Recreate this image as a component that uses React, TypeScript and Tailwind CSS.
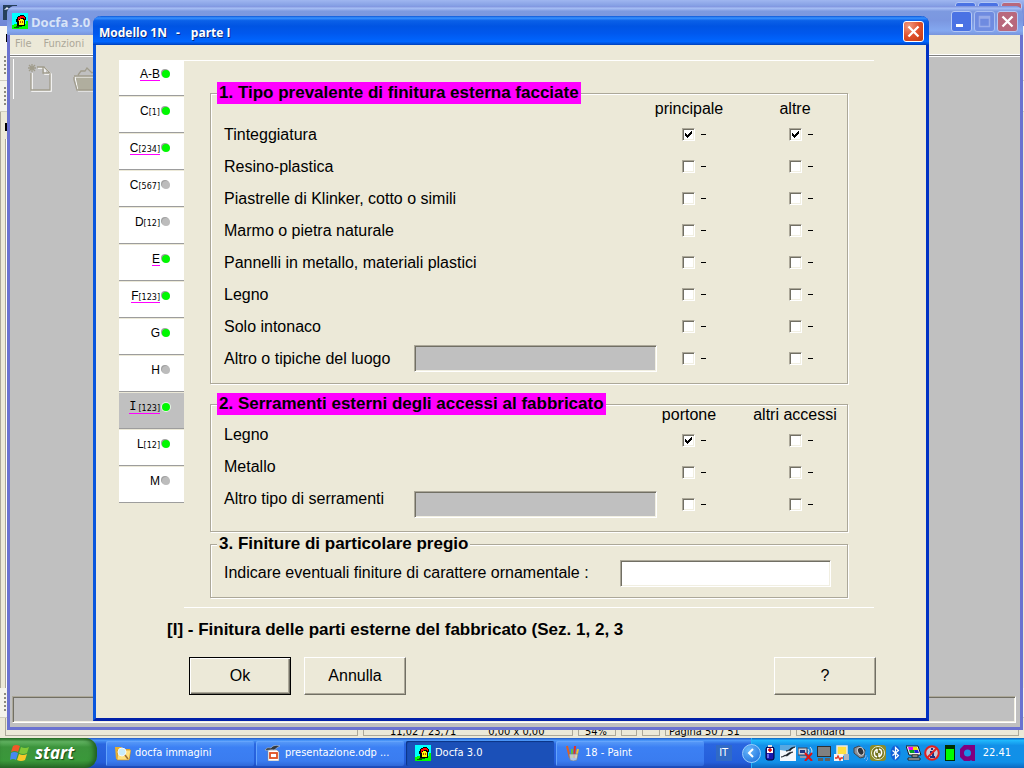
import React, { useState } from "react";

const BEVEL_IN =
  "border border-t-[#aca899] border-l-[#aca899] border-r-white border-b-white shadow-[inset_1px_1px_0_#716f64,inset_-1px_-1px_0_#f1efe2]";

const UI = "font-['Liberation_Sans',Arial,sans-serif]";
const CAPTION = "font-['Open_Sans','Noto_Sans',sans-serif]";
const TAHOMA = "font-['DejaVu_Sans_Condensed','DejaVu_Sans',sans-serif]";

type TabInfo = { main: string; sub?: string; on: boolean; link?: boolean };

const TABS: TabInfo[] = [
  { main: "A-B", on: true, link: true },
  { main: "C", sub: "[1]", on: true },
  { main: "C", sub: "[234]", on: true, link: true },
  { main: "C", sub: "[567]", on: false },
  { main: "D", sub: "[12]", on: false },
  { main: "E", on: true, link: true },
  { main: "F", sub: "[123]", on: true, link: true },
  { main: "G", on: true },
  { main: "H", on: false },
  { main: "I", sub: "[123]", on: true, link: true },
  { main: "L", sub: "[12]", on: true },
  { main: "M", on: false },
];

function Tab({ tab, selected, onSelect }: { tab: TabInfo; selected: boolean; onSelect: () => void }) {
  return (
    <button
      type="button"
      onClick={onSelect}
      className={`mb-px flex h-9 w-full items-start justify-end border-b border-[#9d9d9d] pt-2 pr-[14px] ${selected ? "bg-[#c0c0c0]" : "bg-white"}`}
    >
      <span
        className={`flex h-[13px] items-end border-b text-[12px] leading-3 ${tab.link ? "border-[#ff00ff]" : "border-transparent"}`}
      >
        <span className={tab.main === "I" ? "pr-[2px] font-['Liberation_Mono',monospace]" : ""}>{tab.main}</span>
        {tab.sub && <span className="font-['DejaVu_Sans',sans-serif] text-[8px] leading-[9px]">{tab.sub}</span>}
      </span>
      <span
        className={`mt-[2px] ml-[2px] size-2 rounded-full ${tab.on ? "bg-[#00f800]" : "bg-[#bcbcbc]"} ${
          selected ? "shadow-[0_0_0_1px_#e4f4e4]" : "shadow-[-1px_-1px_0_#a0a0a0]"
        }`}
      />
    </button>
  );
}

function Check({ label, initial = false }: { label: string; initial?: boolean }) {
  const [on, setOn] = useState(initial);
  return (
    <label className="flex items-center gap-[6px]">
      <span className="relative flex size-[13px]">
        <input
          type="checkbox"
          aria-label={label}
          checked={on}
          onChange={(e) => setOn(e.target.checked)}
          className={`size-[13px] appearance-none bg-white ${BEVEL_IN}`}
        />
        {on && (
          <svg viewBox="0 0 13 13" className="pointer-events-none absolute inset-0 size-[13px]" shapeRendering="crispEdges">
            <path d="M3 5h1v1h1v1h1v-1h1v-1h1v-1h1v-1h1v3h-1v1h-1v1h-1v1h-1v1h-1v-1h-1v-1h-1z" fill="#000" />
          </svg>
        )}
      </span>
      <span className="h-px w-[5px] bg-black" />
    </label>
  );
}

const GRID = "grid grid-cols-[minmax(0,1fr)_243px_64px_28px_92px]";

function HeaderRow({ a, b, className }: { a: string; b: string; className: string }) {
  return (
    <div className={`${GRID} h-[18px] leading-[18px] whitespace-nowrap ${className}`}>
      <span className="col-start-3 flex justify-center">{a}</span>
      <span className="col-start-5 flex justify-center">{b}</span>
    </div>
  );
}

type RowInfo = { label: string; a?: boolean; b?: boolean; field?: boolean };

function Row({ row, cols, top }: { row: RowInfo; cols: [string, string]; top?: boolean }) {
  const id = row.label.replace(/\s+/g, "-").toLowerCase();
  const labelClass = `pt-[2px] leading-[18px] whitespace-nowrap ${top ? "self-start" : ""}`;
  return (
    <div className={`${GRID} h-8 items-center`}>
      {row.field ? (
        <label htmlFor={id} className={labelClass}>
          {row.label}
        </label>
      ) : (
        <span className={labelClass}>{row.label}</span>
      )}
      {row.field && <input id={id} type="text" disabled className={`h-[27px] w-full bg-[#c0c0c0] px-1 ${BEVEL_IN}`} />}
      <div className="col-start-3 pl-[25px]">
        <Check label={`${row.label} ${cols[0]}`} initial={row.a} />
      </div>
      <div className="col-start-5 pl-10">
        <Check label={`${row.label} ${cols[1]}`} initial={row.b} />
      </div>
    </div>
  );
}

function Group({ title, marked, className, children }: { title: string; marked?: boolean; className: string; children: React.ReactNode }) {
  return (
    <fieldset
      className={`min-w-0 border border-[#aca899] pr-[6px] pl-[13px] shadow-[1px_1px_0_#fff,inset_1px_1px_0_#fff] ${className}`}
    >
      <legend
        className={`-ml-[7px] h-[22px] px-[2px] text-[17px] leading-[22px] font-bold whitespace-nowrap ${marked ? "bg-[#ff00ff]" : "bg-[#ece9d8]"}`}
      >
        {title}
      </legend>
      {children}
    </fieldset>
  );
}

const FACADE: RowInfo[] = [
  { label: "Tinteggiatura", a: true, b: true },
  { label: "Resino-plastica" },
  { label: "Piastrelle di Klinker, cotto o simili" },
  { label: "Marmo o pietra naturale" },
  { label: "Pannelli in metallo, materiali plastici" },
  { label: "Legno" },
  { label: "Solo intonaco" },
  { label: "Altro o tipiche del luogo", field: true },
];

const DOORS: RowInfo[] = [
  { label: "Legno", a: true },
  { label: "Metallo" },
  { label: "Altro tipo di serramenti", field: true },
];

function DialogButton({ children, primary }: { children: React.ReactNode; primary?: boolean }) {
  return (
    <button
      type="button"
      className={`h-[38px] w-[102px] bg-[#ece9d8] text-[16px] ${
        primary
          ? "border border-black shadow-[inset_1px_1px_0_#fff,inset_-1px_-1px_0_#716f64,inset_-2px_-2px_0_#aca899]"
          : "border border-t-white border-l-white border-r-[#716f64] border-b-[#716f64] shadow-[inset_-1px_-1px_0_#aca899]"
      }`}
    >
      {children}
    </button>
  );
}

function CloseGlyph() {
  return (
    <svg viewBox="0 0 19 19" className="size-full">
      <path d="M4.500 4.500l10 10M14.500 4.500l-10 10" stroke="#fff" strokeWidth="2.300" />
    </svg>
  );
}

function Dialog() {
  const [selected, setSelected] = useState(9);
  return (
    <section
      aria-label="Modello 1N - parte I"
      className="absolute top-4 right-[95px] left-[93px] flex flex-col rounded-t-[8px] border-x-[3px] border-b-[3px] border-t-0 border-r-[#0031c4] border-b-[#0020a8] border-l-[#0855dd] bg-[#ece9d8]"
    >
      <header
        className={`-mx-[3px] flex h-[29px] items-center justify-between rounded-t-[8px] bg-[linear-gradient(#0a57d8_0%,#3a92ff_7%,#0b61e8_16%,#0054e3_35%,#0058ee_60%,#0066ff_88%,#0052dc_95%,#003fb8_100%)] pr-[5px] pl-[6px] text-white ${CAPTION}`}
      >
        <h1 className="flex gap-[9px] pt-1 text-[12px] leading-4 font-bold [text-shadow:1px_1px_0_#0a2a80]">
          <span>Modello 1N</span>
          <span>-</span>
          <span className="pl-[2px]">parte I</span>
        </h1>
        <button
          type="button"
          aria-label="Chiudi"
          className="mt-[2px] size-[21px] rounded-[3px] border border-white bg-[radial-gradient(circle_at_25%_20%,#f09a80,#e0502c_50%,#c03a10)]"
        >
          <CloseGlyph />
        </button>
      </header>

      <div className="flex pt-[15px] pr-[52px] pl-[23px]">
        <nav aria-label="Sezioni" className="w-[65px] shrink-0">
          {TABS.map((t, i) => (
            <Tab key={i} tab={t} selected={i === selected} onSelect={() => setSelected(i)} />
          ))}
        </nav>
        <div className="flex min-w-0 flex-1 flex-col border-y border-white px-[26px] pt-[21px] pb-[9px] text-[16px]">
          <Group title="1. Tipo prevalente di finitura esterna facciate" marked className="pb-[9px]">
            <HeaderRow a="principale" b="altre" className="-mt-1" />
            {FACADE.map((r) => (
              <Row key={r.label} row={r} cols={["principale", "altre"]} />
            ))}
          </Group>
          <Group title="2. Serramenti esterni degli accessi al fabbricato" marked className="mt-[9px] pb-[11px]">
            <HeaderRow a="portone" b="altri accessi" className="-mt-[9px]" />
            {DOORS.map((r) => (
              <Row key={r.label} row={r} cols={["portone", "altri accessi"]} top />
            ))}
          </Group>
          <Group title="3. Finiture di particolare pregio" className="mt-px pb-[6px]">
            <div className="flex h-9 items-center justify-between pr-[10px]">
              <label htmlFor="ornamentale" className="whitespace-nowrap">
                Indicare eventuali finiture di carattere ornamentale :
              </label>
              <input id="ornamentale" type="text" className={`h-[27px] w-[211px] bg-white px-1 ${BEVEL_IN}`} />
            </div>
          </Group>
        </div>
      </div>

      <h2 className="mt-[11px] pl-[71px] text-[17px] leading-[22px] font-bold">
        [I] - Finitura delle parti esterne del fabbricato (Sez. 1, 2, 3
      </h2>
      <div className="mt-4 flex gap-[13px] pr-[50px] pb-[23px] pl-[93px]">
        <DialogButton primary>Ok</DialogButton>
        <DialogButton>Annulla</DialogButton>
        <span className="ml-auto flex">
          <DialogButton>?</DialogButton>
        </span>
      </div>
    </section>
  );
}

function HouseIcon() {
  return (
    <svg viewBox="0 0 16 16" className="size-4 shrink-0" shapeRendering="crispEdges">
      <rect width="16" height="16" fill="#00ffff" />
      <path d="M0 12h2v-1h12v-3h2v8h-16z" fill="#00ff00" />
      <path d="M5 4h1v-1h2v-1h4v1h1v1h1v3h-1v6h-8v-4h-1v-3h1z" fill="#000" />
      <path d="M6 4h2v-1h4v1h1v2h-1v-1h-3v1h-2v2h-1z" fill="#ff0000" />
      <path d="M7 7h1v-1h3v1h1v5h-5z" fill="#ffff00" />
      <path d="M8 8h1v2h-1zM10 8h1v2h-1z" fill="#c04000" />
      <path d="M2 14h2v-1h6v1h-3v1h-5z" fill="#006000" />
    </svg>
  );
}

function DocfaWindow() {
  const btn = "flex size-[21px] rounded-[3px] border border-[#b4c8f4]";
  return (
    <section
      aria-label="Docfa 3.0"
      className="absolute top-[6px] right-px bottom-2 left-[7px] flex flex-col rounded-t-[8px] border-x-[3px] border-b-[3px] border-[#6a72d0] bg-[#c0c0c0]"
    >
      <header
        className={`-mx-[3px] flex h-[29px] items-center justify-between rounded-t-[8px] bg-[linear-gradient(#7a8fdc_0%,#a6bdf4_8%,#7d9ae0_18%,#7b97e0_50%,#84a8f0_85%,#7894dc_100%)] pr-[5px] pl-[5px] ${CAPTION}`}
      >
        <span className="flex items-center gap-[3px]">
          <HouseIcon />
          <span className="pt-[2px] text-[13px] leading-4 font-bold text-[#d8e4f8]">Docfa 3.0</span>
        </span>
        <span className="flex gap-[2px] pt-px">
          <button type="button" aria-label="Riduci a icona" className={`${btn} bg-[#4a72e4]`}>
            <svg viewBox="0 0 19 19" className="size-full">
              <rect x="4" y="12" width="7" height="3" fill="#fff" />
            </svg>
          </button>
          <button type="button" aria-label="Ingrandisci" disabled className={`${btn} bg-[#6c88e0] opacity-80`}>
            <svg viewBox="0 0 19 19" className="size-full">
              <path d="M4.500 4.500h10v10h-10zM4.500 6h10" fill="none" stroke="#a0b0ec" strokeWidth="1.500" />
            </svg>
          </button>
          <button type="button" aria-label="Chiudi Docfa" className={`${btn} bg-[#b8687c]`}>
            <CloseGlyph />
          </button>
        </span>
      </header>
      <nav className={`flex h-[19px] items-center gap-3 bg-[#ece9d8] pl-[5px] text-[11px] text-[#aca899] ${TAHOMA}`}>
        <a href="#file">File</a>
        <a href="#funzioni">Funzioni</a>
      </nav>
      <div className="h-[3px] border-y border-white bg-[#808080]" />
      <div className="flex flex-1 items-start pt-[2px] pl-[3px]">
        <span className="h-10 w-px bg-white" />
        <svg viewBox="0 0 26 30" className="mt-1 ml-[13px] h-[30px] w-[26px]" fill="none">
          <path d="M5 10v18h19V11l-6-6h-7M18 5v6h6" stroke="#fff" strokeWidth="1.500" />
          <path d="M4 10v17h19V10l-6-6h-7M16 4v6h6M5 1v8M1 5h8M2 2l6 6M8 2l-6 6" stroke="#a09c8c" strokeWidth="1.300" />
        </svg>
        <svg viewBox="0 0 30 26" className="mt-2 ml-5 h-[26px] w-[30px]" fill="none">
          <path d="M2 10l3 14h23V10z" fill="#b0ae9e" stroke="#fff" />
          <path d="M1 9h27M1 10v3l3 10h24M5 8l3-4h4l2-3 5 5 4-3 5 5" stroke="#a09c8c" strokeWidth="1.300" />
        </svg>
      </div>
      <div className={`mt-[2px] mr-1 mb-1 ml-[2px] h-[27px] bg-[#c0c0c0] ${BEVEL_IN}`} />
    </section>
  );
}

function Grip({ className }: { className: string }) {
  return (
    <div className={`flex flex-col gap-[2px] border-b border-[#d0cec0] bg-[#f4f3ec] pl-1 ${className}`}>
      {[0, 1, 2, 3, 4].map((i) => (
        <span key={i} className="size-[2px] bg-[#8c8a80]" />
      ))}
    </div>
  );
}

function BackWindow() {
  const cell = "flex h-full items-end gap-6 border-r border-b border-l border-[#aca899] leading-[7px] whitespace-nowrap";
  return (
    <div className="flex flex-1 flex-col bg-[#ece9d8]">
      <div className="flex h-[26px] items-start justify-between bg-[linear-gradient(#9fb6f0,#7b97e0_30%,#6f86d6)]">
        <svg viewBox="0 0 16 16" className="mt-1 ml-[2px] size-4">
          <path d="M1 1h14v4l-4-2-4 5v8h-6z" fill="#26405c" />
          <path d="M2 6l3-3 2 2z" fill="#e8eef8" />
        </svg>
        <div className="mt-[2px] mr-[2px] flex gap-[2px]">
          <span className="h-[21px] w-[21px] rounded-[3px] border border-[#b4c8f4] bg-[#4a72e4]" />
          <span className="h-[21px] w-[21px] rounded-[3px] border border-[#b4c8f4] bg-[#4a72e4]" />
          <span className="h-[21px] w-[21px] rounded-[3px] border border-[#b4c8f4] bg-[#b8687c]" />
        </div>
      </div>
      <div className="flex h-6 items-center bg-[#f8f8f4] pl-[6px]">
        <span className="h-2 w-px bg-black" />
      </div>
      <Grip className="h-[31px] pt-[6px]" />
      <Grip className="h-[31px] pt-[6px]" />
      <div className="flex flex-1 flex-col border-l border-[#aca899] pt-[11px] pl-1">
        <span className="h-2 w-[2px] bg-black" />
        <span className="mt-2 w-[2px] flex-1 border-l border-[#aca899] bg-white" />
      </div>
      <Grip className="h-[30px] pt-[5px]" />
      <div className={`flex h-5 gap-[5px] overflow-hidden pr-[5px] pb-[2px] pl-[5px] text-[11px] text-black ${TAHOMA}`}>
        <span className={`${cell} w-[353px]`} />
        <span className={`${cell} w-[210px] pl-[26px]`}>
          <span>11,02 / 23,71</span>
          <span className="pl-2">0,00 x 0,00</span>
        </span>
        <span className={`${cell} w-[38px] pl-[6px]`}>54%</span>
        <span className={`${cell} w-4`} />
        <span className={`${cell} w-[18px]`} />
        <span className={`${cell} w-[126px] pl-[3px]`}>Pagina 50 / 51</span>
        <span className={`${cell} flex-1 pl-[3px]`}>Standard</span>
      </div>
    </div>
  );
}

function TrayIcons() {
  const c = "size-4 shrink-0";
  return (
    <div className="flex gap-[2px]">
      <svg viewBox="0 0 16 16" className={c}>
        <rect x="4" y="2" width="8" height="13" rx="2" fill="#1818b0" stroke="#000030" />
        <rect x="5" y="3" width="6" height="5" fill="#fff" />
        <path d="M8 3v4M6 5h4" stroke="#e00000" strokeWidth="1.500" />
        <path d="M6 9v4" stroke="#8080ff" strokeWidth="1.500" />
        <rect x="6" y="0" width="4" height="2" fill="#e0e0e0" />
      </svg>
      <svg viewBox="0 0 16 16" className={c}>
        <rect width="16" height="16" fill="#f4f8fc" />
        <path d="M0 0h16v2l-9 4-7-1z" fill="#58a8e0" />
        <path d="M6 6c2 0 2-1 3-1 1-2 4-3 6-3-2 1-4 2-5 4-1-1-2 0-4 0zM1 12c2 0 3-2 5-2 2-2 4-3 7-3-3 1-4 3-6 4-2-1-4 1-6 1z" fill="#101820" stroke="#101820" strokeWidth=".6" />
      </svg>
      <svg viewBox="0 0 16 16" className={c}>
        <rect x="0" y="3" width="9" height="7" fill="#c8ccd8" stroke="#445" />
        <rect x="2" y="5" width="5" height="3" fill="#203880" />
        <path d="M2 12h6" stroke="#99a" strokeWidth="2" />
        <path d="M10 4q2 2 0 5M12 2q4 4 0 8" fill="none" stroke="#d0e0f4" />
        <path d="M7 8l7 8M14 8l-7 8" stroke="#e01010" strokeWidth="2" />
      </svg>
      <svg viewBox="0 0 16 16" className={c}>
        <rect x="1.500" y="1.500" width="13" height="10" fill="#808080" stroke="#303030" />
        <rect x="2" y="13" width="5" height="3" fill="#606060" />
        <rect x="9" y="13" width="5" height="3" fill="#606060" />
      </svg>
      <svg viewBox="0 0 16 16" className={c}>
        <rect x="3" y="1" width="10" height="9" fill="#ffe040" stroke="#e8e8e8" strokeWidth="1.500" />
        <rect x="10" y="9" width="5" height="6" fill="#b0b4c0" />
        <rect x="0" y="9" width="9" height="7" fill="#f4f4f4" />
        <path d="M1 13h2l1-2 2 4 1-2h2" fill="none" stroke="#e03020" strokeWidth="1.300" />
      </svg>
      <svg viewBox="0 0 16 16" className={c}>
        <path d="M2 3l5-2 6 4-1 7-4 1-6-5z" fill="#8c9098" stroke="#404448" />
        <ellipse cx="8.500" cy="6.500" rx="3" ry="4" fill="#30343c" stroke="#d0d4d8" transform="rotate(-25 8 6)" />
        <path d="M12 14q2-1 2-4M14 16q2-1 2-4" fill="none" stroke="#80b0f0" />
      </svg>
      <svg viewBox="0 0 16 16" className={c}>
        <rect width="16" height="16" rx="3" fill="#8c8c28" />
        <circle cx="8" cy="8" r="6.500" fill="#707018" stroke="#f0f0d0" />
        <path d="M7 4q-4 3-2 7l2 1M9 12q4-3 2-7l-2-1M7 4v4M9 12V8" fill="none" stroke="#fff" strokeWidth="1.500" />
      </svg>
      <svg viewBox="0 0 16 16" className={c}>
        <ellipse cx="7.500" cy="8" rx="5" ry="7.500" fill="#1060d8" />
        <path d="M4.500 5.500l6 5-3 3V2.500l3 3-6 5" fill="none" stroke="#fff" strokeWidth="1.200" />
      </svg>
      <svg viewBox="0 0 16 16" className={c}>
        <path d="M0 1h12l3 9H3z" fill="#f0f0f0" stroke="#202020" />
        <path d="M2 2h5v3H3z" fill="#f000f0" />
        <path d="M7 2h4l1 3H7z" fill="#f0e000" />
        <path d="M3 5h5l1 3H4z" fill="#00a020" />
        <path d="M8 5h4l1 3H9z" fill="#2020e0" />
        <path d="M6 10h6v2H6zM2 13h12v2H2z" fill="#e0e0e0" stroke="#202020" />
      </svg>
      <svg viewBox="0 0 16 16" className={c}>
        <circle cx="8" cy="8" r="6.800" fill="#c8c8d8" stroke="#e02020" strokeWidth="2" />
        <path d="M8 3v2M6 7h3v5M6 12h5" stroke="#203080" strokeWidth="2" fill="none" />
        <path d="M3 13L13 3" stroke="#e02020" strokeWidth="2" />
      </svg>
      <svg viewBox="0 0 16 16" className={c}>
        <rect x="3" y="0" width="10" height="16" fill="#003000" />
        <rect x="4" y="4" width="8" height="11" fill="#00ff00" />
      </svg>
      <svg viewBox="0 0 16 16" className={c}>
        <path d="M4 0h11v16h-3l-1-1-1 1H4l-4-4V4z" fill="#800080" />
        <circle cx="7.500" cy="8" r="3.500" fill="#1a90e8" />
      </svg>
    </div>
  );
}

function TaskButton({ label, icon, active }: { label: string; icon: React.ReactNode; active?: boolean }) {
  return (
    <button
      type="button"
      className={`flex h-[25px] w-[148px] items-center gap-1 rounded-[2px] pl-[9px] ${
        active
          ? "bg-[#1b50b8] shadow-[inset_1px_1px_1px_#0c3484]"
          : "bg-[linear-gradient(#5a9cf8,#3c80f4_25%,#3a7cf0_80%,#2f68d8)] shadow-[inset_1px_1px_0_#64a4fc]"
      }`}
    >
      {icon}
      <span className="whitespace-nowrap">{label}</span>
    </button>
  );
}

function Taskbar() {
  return (
    <footer
      className={`flex h-[30px] shrink-0 items-center bg-[linear-gradient(#1f58c8_0%,#4a96f8_8%,#2a66e0_20%,#245edb_80%,#1c48b4_100%)] text-[11px] text-white ${TAHOMA}`}
    >
      <button
        type="button"
        className="flex h-[30px] w-[97px] items-center gap-[5px] rounded-r-[12px] bg-[linear-gradient(#2c7c2c,#62b462_12%,#3c943c_30%,#3a983a_75%,#2a702a)] pl-[10px] shadow-[inset_-3px_0_5px_#1f5c1f]"
      >
        <svg viewBox="0 0 20 18" className="h-[18px] w-5">
          <path d="M3 2q3-2 7 0l-2 6q-3-2-7 0z" fill="#f05828" />
          <path d="M11 3q4 2 8 0l-2 6q-4 2-8 0z" fill="#80c838" />
          <path d="M1 9q3-2 7 0l-2 7q-3-2-6 0z" fill="#4888f0" />
          <path d="M9 10q4 2 8 0l-2 6q-4 2-8 0z" fill="#f8c828" />
        </svg>
        <span className="font-['Open_Sans',sans-serif] text-[17px] leading-5 font-bold italic [text-shadow:1px_1px_1px_#184818]">start</span>
      </button>
      <div className="flex flex-1 gap-[2px] pl-[9px]">
        <TaskButton
          label="docfa immagini"
          icon={
            <svg viewBox="0 0 16 16" className="size-4">
              <path d="M0 2h6l2 2h7v10H1z" fill="#e8b030" />
              <path d="M3 5h13l-2 10H2z" fill="#ffe080" stroke="#c08820" strokeWidth=".6" />
              <circle cx="7" cy="7" r="4" fill="#c8ecfc" stroke="#f0f8ff" />
              <path d="M10 10l3 4" stroke="#a07030" strokeWidth="1.500" />
            </svg>
          }
        />
        <TaskButton
          label="presentazione.odp ..."
          icon={
            <svg viewBox="0 0 16 16" className="size-4">
              <path d="M3 5h9l2 2v9H3z" fill="#fff" stroke="#888" strokeWidth=".6" />
              <rect x="5" y="8" width="7" height="5" fill="none" stroke="#e05020" strokeWidth="1.800" />
              <path d="M0 5c2-3 4-2 6-2 2-3 6-3 9-2-3 1-4 3-6 4-3-1-6 1-9 0z" fill="#303840" stroke="#d8dce0" strokeWidth=".5" />
            </svg>
          }
        />
        <TaskButton label="Docfa 3.0" active icon={<HouseIcon />} />
        <TaskButton
          label="18 - Paint"
          icon={
            <svg viewBox="0 0 16 16" className="size-4">
              <path d="M5 13L2 1" stroke="#e06020" strokeWidth="2" />
              <path d="M7 13l0-9" stroke="#60c040" strokeWidth="2" />
              <path d="M9 13l1-12" stroke="#e83020" strokeWidth="2" />
              <path d="M11 13l2-9" stroke="#f0c030" strokeWidth="2" />
              <path d="M4 9h9l-1 6q-4 2-7 0z" fill="#d4dce4" fillOpacity=".75" stroke="#707880" strokeWidth=".6" />
            </svg>
          }
        />
      </div>
      <span className="mr-[10px] flex h-4 w-4 items-center justify-center bg-[#316ac5]">IT</span>
      <button
        type="button"
        aria-label="Mostra icone nascoste"
        className="z-10 -mr-[10px] flex size-[19px] items-center justify-center rounded-full border border-[#9cd0fc] bg-[radial-gradient(circle_at_35%_30%,#68b8fc,#1468d8)]"
      >
        <svg viewBox="0 0 10 10" className="size-[10px]">
          <path d="M7 1L3 5l4 4" fill="none" stroke="#fff" strokeWidth="2" />
        </svg>
      </button>
      <div className="flex h-[30px] items-center gap-[7px] border-l border-[#20b8f8] bg-[linear-gradient(#0c60c0_0%,#20b8fc_8%,#1290e8_25%,#1090e8_80%,#0c68c0_100%)] pr-[13px] pl-[10px]">
        <TrayIcons />
        <time className="whitespace-nowrap">22.41</time>
      </div>
    </footer>
  );
}

export default function App() {
  return (
    <div className={`flex min-h-screen flex-col overflow-hidden text-black ${UI}`}>
      <main className="relative flex flex-1 flex-col">
        <BackWindow />
        <DocfaWindow />
        <Dialog />
      </main>
      <Taskbar />
    </div>
  );
}
